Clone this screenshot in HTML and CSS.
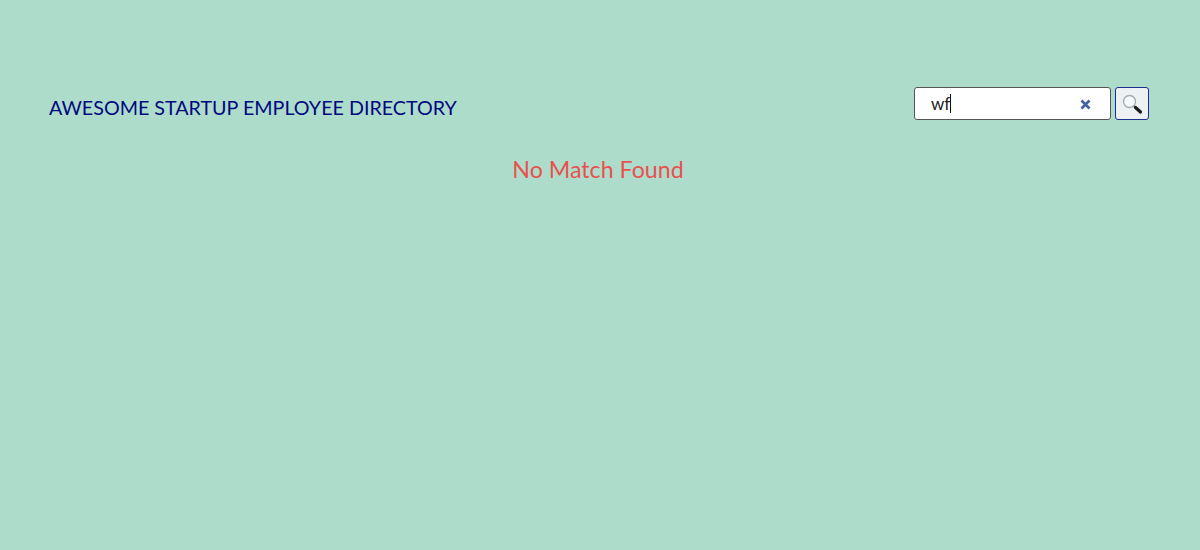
FILE: index.html
```html
<!DOCTYPE html>
<html>
<head>
    <meta charset="UTF-8">
    <title>Employee Directory</title>
    <link rel="stylesheet" href="styles.css">
</head>
<body>
    <header class="top">
        <h1 class="title">AWESOME STARTUP EMPLOYEE DIRECTORY</h1>
        <form class="search">
            <div class="search-box">
                <span class="search-text">wf</span>
                <svg class="clear" width="11" height="11" viewBox="0 0 11 11">
                    <path d="M1.5 1.5L9.5 9.5M9.5 1.5L1.5 9.5" stroke="#3f63a0" stroke-width="2.6" fill="none"/>
                </svg>
            </div>
            <div class="search-btn">
                <svg width="22" height="22" viewBox="0 0 22 22">
                    <circle cx="8.5" cy="8.5" r="6" fill="#f6fafc" stroke="#a3acb0" stroke-width="1.4"/>
                    <path d="M13 13L14.5 14.5" stroke="#888" stroke-width="2" fill="none"/>
                    <path d="M14.5 14.5L19.5 19" stroke="#1c1c1c" stroke-width="3.2" stroke-linecap="round" fill="none"/>
                </svg>
            </div>
        </form>
    </header>
    <p class="no-match">No Match Found</p>
</body>
</html>
```

FILE: styles.css
```css
body {
    margin: 0;
    height: 550px;
    overflow: hidden;
    background-color: #aedccb;
    font-family: "Lato", "Open Sans", sans-serif;
}
.top {
    display: flex;
    justify-content: space-between;
    align-items: flex-start;
    padding: 87px 51px 0 49px;
}
.title {
    margin: 8px 0 0;
    font-size: 19.7px;
    line-height: 26px;
    font-weight: 400;
    color: #00087f;
}
.search {
    display: flex;
    gap: 4px;
}
.search-box {
    box-sizing: border-box;
    width: 197px;
    height: 33px;
    display: flex;
    align-items: center;
    justify-content: space-between;
    padding: 0 19px 0 16px;
    background-color: #fff;
    border: 1px solid #555;
    border-radius: 3px;
}
.search-text {
    font-size: 17px;
    line-height: 19px;
    color: #222;
    border-right: 1px solid #111;
}
.clear {
    margin-top: 2px;
}
.search-btn {
    box-sizing: border-box;
    width: 34px;
    height: 33px;
    display: flex;
    align-items: center;
    justify-content: center;
    background-color: #eef1f3;
    border: 1.5px solid #1c2f8c;
    border-radius: 3px;
}
.no-match {
    margin: 32px 4px 0 0;
    text-align: center;
    font-size: 23.2px;
    line-height: 32px;
    color: #e9504f;
}
```
